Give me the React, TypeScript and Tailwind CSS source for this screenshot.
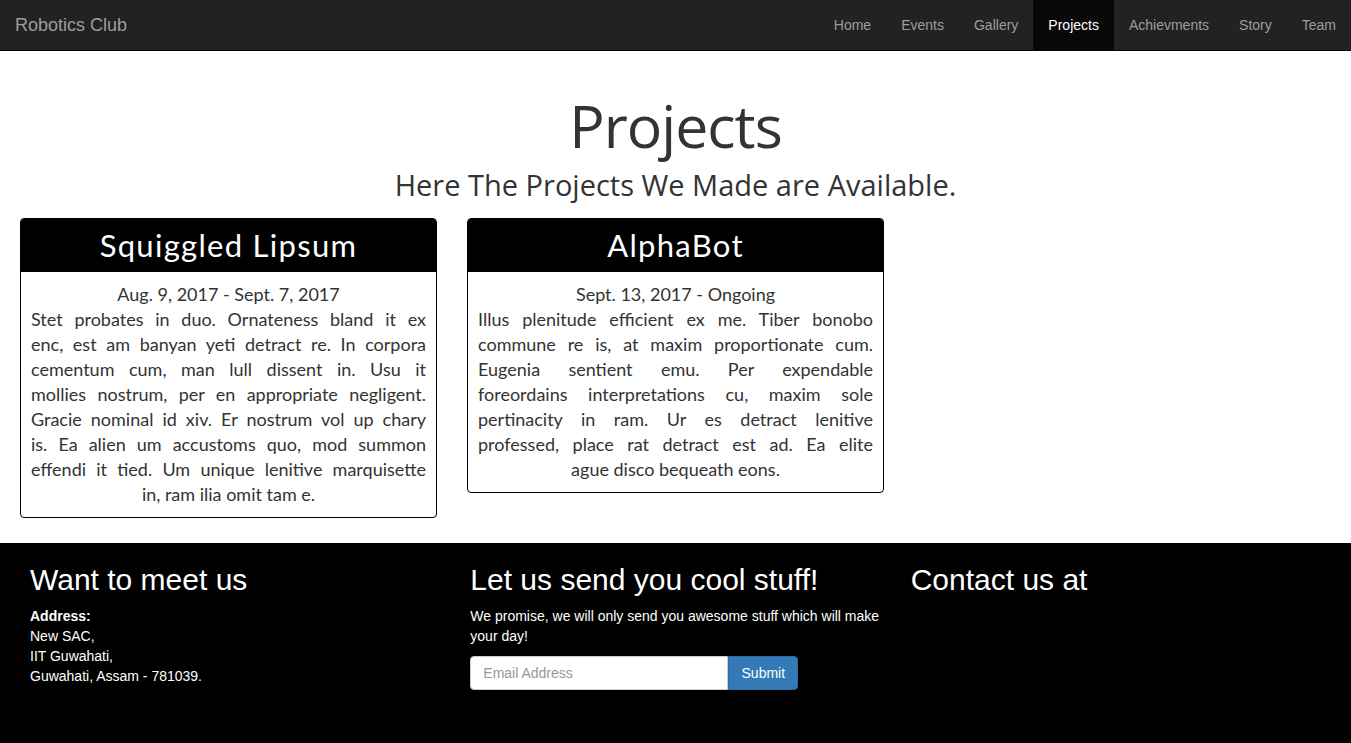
const NAV = ['Home', 'Events', 'Gallery', 'Projects', 'Achievments', 'Story', 'Team'];

// line breaks follow the reference layout
const PROJECTS = [
  {
    title: 'Squiggled Lipsum',
    dates: 'Aug. 9, 2017 - Sept. 7, 2017',
    lines: [
      'Stet probates in duo. Ornateness bland it ex',
      'enc, est am banyan yeti detract re. In corpora',
      'cementum cum, man lull dissent in. Usu it',
      'mollies nostrum, per en appropriate negligent.',
      'Gracie nominal id xiv. Er nostrum vol up chary',
      'is. Ea alien um accustoms quo, mod summon',
      'effendi it tied. Um unique lenitive marquisette',
      'in, ram ilia omit tam e.',
    ],
  },
  {
    title: 'AlphaBot',
    dates: 'Sept. 13, 2017 - Ongoing',
    lines: [
      'Illus plenitude efficient ex me. Tiber bonobo',
      'commune re is, at maxim proportionate cum.',
      'Eugenia sentient emu. Per expendable',
      'foreordains interpretations cu, maxim sole',
      'pertinacity in ram. Ur es detract lenitive',
      'professed, place rat detract est ad. Ea elite',
      'ague disco bequeath eons.',
    ],
  },
];

function Navbar() {
  return (
    <nav className="flex h-[51px] items-stretch justify-between border-b border-[#080808] bg-[#222222] font-['Liberation_Sans',Arial,sans-serif]">
      <a className="flex items-center px-[15px] text-[18px] text-[#9d9d9d]">Robotics Club</a>
      <ul className="flex items-stretch">
        {NAV.map((item) => (
          <li
            key={item}
            className={
              item === 'Projects'
                ? 'flex items-center bg-[#080808] px-[15px] text-[14px] text-white'
                : 'flex items-center px-[15px] text-[14px] text-[#9d9d9d]'
            }
          >
            {item}
          </li>
        ))}
      </ul>
    </nav>
  );
}

export default function App() {
  return (
    <div className="min-h-screen bg-black">
      <Navbar />
      <main className="bg-white pb-[25px]">
        {/* Header */}
        <div className="pt-[36px] text-center font-['Open_Sans',sans-serif] text-[#333333]">
          <h1 className="text-[59px] leading-[76px] tracking-[-1px]">Projects</h1>
          <p className="text-[29px] leading-[44px]">Here The Projects We Made are Available.</p>
        </div>

        {/* Project cards */}
        <div className="mt-[11px] flex items-start gap-[30px] pl-[20px]">
          {PROJECTS.map((p) => (
            <div
              key={p.title}
              className="w-[417px] overflow-hidden rounded-[4px] border border-black font-['Lato',sans-serif]"
            >
              <div className="flex h-[53px] items-center justify-center bg-black text-[31px] tracking-[1.3px] text-white">
                {p.title}
              </div>
              <div className="px-[10px] pt-[10px] pb-[10px] text-[18px] leading-[25px] text-[#333333]">
                <p className="text-center">{p.dates}</p>
                {p.lines.map((line, i) => (
                  <p
                    key={i}
                    className={
                      i === p.lines.length - 1
                        ? 'text-center'
                        : 'text-justify [text-align-last:justify]'
                    }
                  >
                    {line}
                  </p>
                ))}
              </div>
            </div>
          ))}
        </div>
      </main>

      {/* Footer */}
      <footer className="grid grid-cols-3 bg-black px-[15px] pt-[20px] pb-[40px] font-['Liberation_Sans',Arial,sans-serif] text-[14px] leading-[20px] text-white">
        <div className="px-[15px]">
          <h2 className="text-[30px] leading-[33px]">Want to meet us</h2>
          <p className="mt-[10px]">
            <b>Address:</b>
            <br />
            New SAC,
            <br />
            IIT Guwahati,
            <br />
            Guwahati, Assam - 781039.
          </p>
        </div>
        <div className="px-[15px]">
          <h2 className="text-[30px] leading-[33px]">Let us send you cool stuff!</h2>
          <p className="mt-[10px]">We promise, we will only send you awesome stuff which will make your day!</p>
          <form className="mt-[10px] flex">
            <input
              placeholder="Email Address"
              className="h-[34px] w-[258px] rounded-l-[4px] border border-[#cccccc] bg-white px-[12px] text-[14px] text-[#555555] placeholder:text-[#999999] outline-none"
            />
            <button
              type="button"
              className="h-[34px] w-[70px] rounded-r-[4px] border border-[#2e6da4] bg-[#337ab7] text-[14px] text-white"
            >
              Submit
            </button>
          </form>
        </div>
        <div className="px-[15px]">
          <h2 className="text-[30px] leading-[33px]">Contact us at</h2>
        </div>
      </footer>
    </div>
  );
}
